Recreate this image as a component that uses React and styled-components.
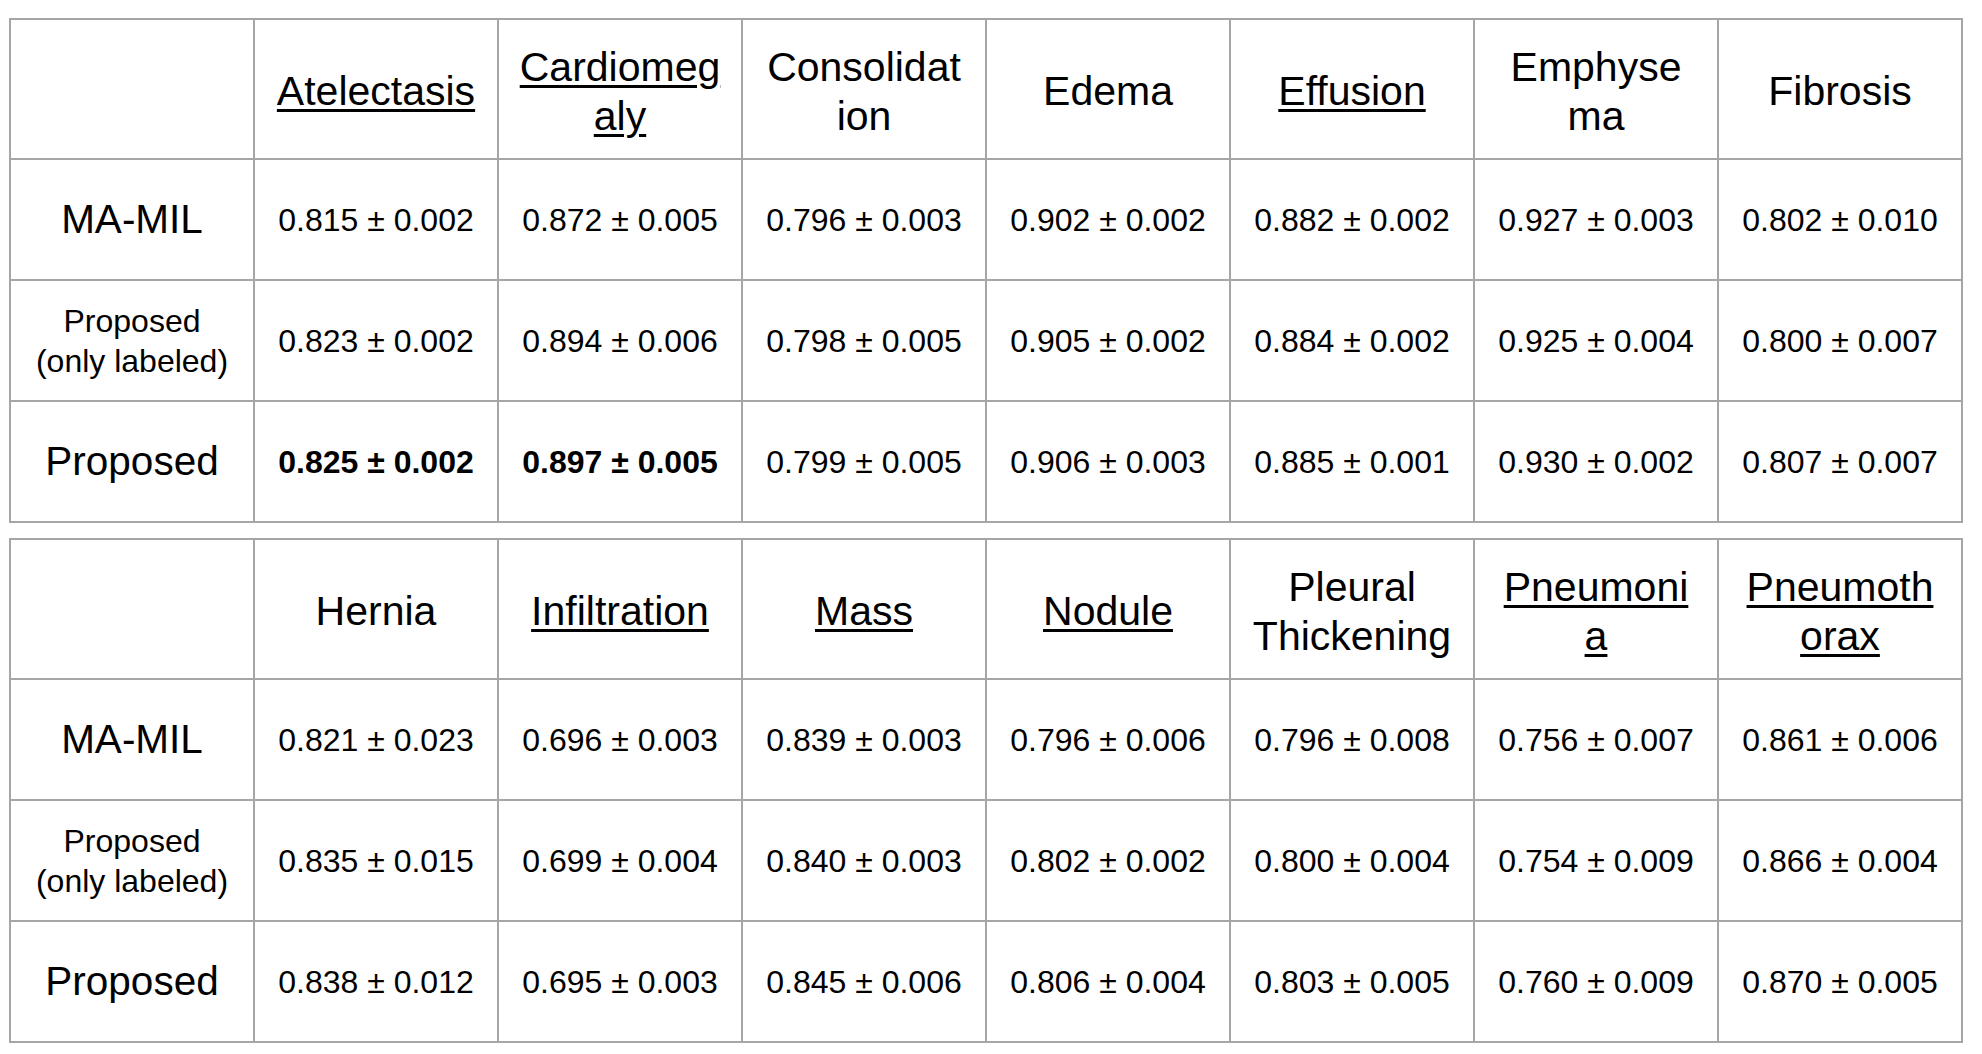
import React from 'react';
import styled, { createGlobalStyle } from 'styled-components';

const GlobalStyle = createGlobalStyle`
  html, body {
    margin: 0;
    padding: 0;
    background: #ffffff;
  }
  body {
    font-family: "Liberation Sans", Arial, sans-serif;
    color: #000000;
  }
`;

const LINE = '#a6a6a6';

const Page = styled.div`
  display: flex;
  flex-direction: column;
  gap: 15px;
  padding: 18px 0 0 9px;
`;

const Table = styled.div`
  display: grid;
  grid-template-columns: repeat(8, 244px);
  grid-template-rows: 140px repeat(3, 121px);
  width: max-content;
  border-top: 2px solid ${LINE};
  border-left: 2px solid ${LINE};
`;

const Cell = styled.div`
  display: flex;
  align-items: center;
  justify-content: center;
  text-align: center;
  border-right: 2px solid ${LINE};
  border-bottom: 2px solid ${LINE};
  font-size: 32px;
  line-height: 40px;
  font-weight: ${(p) => (p.$bold ? 700 : 400)};
`;

const HeadCell = styled(Cell)`
  padding-top: 5px;
  font-size: 41px;
  line-height: 49px;
`;

const HeadText = styled.span`
  text-decoration: ${(p) => (p.$link ? 'underline' : 'none')};
  text-decoration-thickness: 2.6px;
  text-underline-offset: 4px;
`;

const RowLabel = styled(Cell)`
  font-size: ${(p) => (p.$small ? '32px' : '40.5px')};
  line-height: ${(p) => (p.$small ? '40px' : '49px')};
`;

const ROWS = [
  { label: ['MA-MIL'], small: false },
  { label: ['Proposed', '(only labeled)'], small: true },
  { label: ['Proposed'], small: false },
];

const TABLES = [
  {
    heads: [
      { lines: ['Atelectasis'], link: true },
      { lines: ['Cardiomeg', 'aly'], link: true },
      { lines: ['Consolidat', 'ion'] },
      { lines: ['Edema'] },
      { lines: ['Effusion'], link: true },
      { lines: ['Emphyse', 'ma'] },
      { lines: ['Fibrosis'] },
    ],
    values: [
      ['0.815 ± 0.002', '0.872 ± 0.005', '0.796 ± 0.003', '0.902 ± 0.002', '0.882 ± 0.002', '0.927 ± 0.003', '0.802 ± 0.010'],
      ['0.823 ± 0.002', '0.894 ± 0.006', '0.798 ± 0.005', '0.905 ± 0.002', '0.884 ± 0.002', '0.925 ± 0.004', '0.800 ± 0.007'],
      ['0.825 ± 0.002', '0.897 ± 0.005', '0.799 ± 0.005', '0.906 ± 0.003', '0.885 ± 0.001', '0.930 ± 0.002', '0.807 ± 0.007'],
    ],
    bold: [[2, 0], [2, 1]],
  },
  {
    heads: [
      { lines: ['Hernia'] },
      { lines: ['Infiltration'], link: true },
      { lines: ['Mass'], link: true },
      { lines: ['Nodule'], link: true },
      { lines: ['Pleural', 'Thickening'] },
      { lines: ['Pneumoni', 'a'], link: true },
      { lines: ['Pneumoth', 'orax'], link: true },
    ],
    values: [
      ['0.821 ± 0.023', '0.696 ± 0.003', '0.839 ± 0.003', '0.796 ± 0.006', '0.796 ± 0.008', '0.756 ± 0.007', '0.861 ± 0.006'],
      ['0.835 ± 0.015', '0.699 ± 0.004', '0.840 ± 0.003', '0.802 ± 0.002', '0.800 ± 0.004', '0.754 ± 0.009', '0.866 ± 0.004'],
      ['0.838 ± 0.012', '0.695 ± 0.003', '0.845 ± 0.006', '0.806 ± 0.004', '0.803 ± 0.005', '0.760 ± 0.009', '0.870 ± 0.005'],
    ],
    bold: [],
  },
];

const Lines = ({ lines }) =>
  lines.map((line, i) => (
    <React.Fragment key={i}>
      {i > 0 && <br />}
      {line}
    </React.Fragment>
  ));

const ResultTable = ({ heads, values, bold }) => {
  const isBold = (r, c) => bold.some(([br, bc]) => br === r && bc === c);
  return (
    <Table>
      <HeadCell />
      {heads.map((h, i) => (
        <HeadCell key={i}>
          <HeadText $link={h.link}>
            <Lines lines={h.lines} />
          </HeadText>
        </HeadCell>
      ))}
      {ROWS.map((row, r) => (
        <React.Fragment key={r}>
          <RowLabel $small={row.small}>
            <span>
              <Lines lines={row.label} />
            </span>
          </RowLabel>
          {values[r].map((v, c) => (
            <Cell key={c} $bold={isBold(r, c)}>
              {v}
            </Cell>
          ))}
        </React.Fragment>
      ))}
    </Table>
  );
};

export default function App() {
  return (
    <>
      <GlobalStyle />
      <Page>
        {TABLES.map((t, i) => (
          <ResultTable key={i} {...t} />
        ))}
      </Page>
    </>
  );
}
